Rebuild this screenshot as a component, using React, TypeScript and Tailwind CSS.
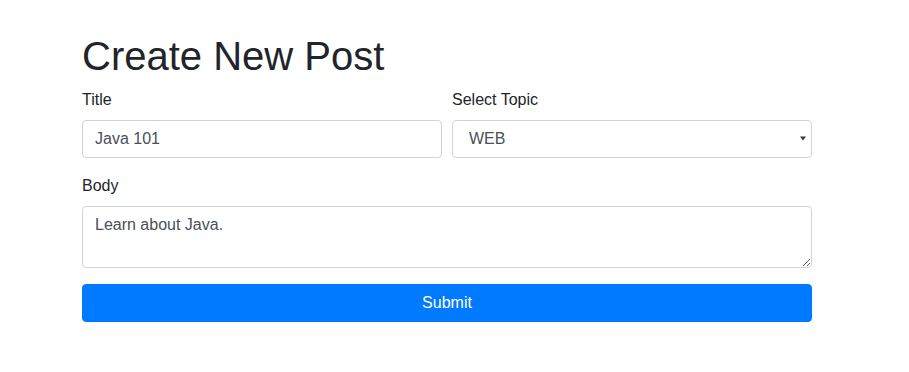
import React from "react";

export default function App() {
  return (
    <div className="min-h-screen bg-white text-[#212529] text-[16px] leading-[24px]" style={{ fontFamily: '"Liberation Sans", Arial, sans-serif' }}>
      <div className="w-[730px] ml-[82px] pt-[32px]">
        <h1 className="text-[40px] leading-[48px] font-normal mb-[8px]">Create New Post</h1>
        <form onSubmit={(e) => e.preventDefault()}>
          <div className="grid grid-cols-2 gap-x-[10px] mb-[16px]">
            <div>
              <label className="block mb-[8px]">Title</label>
              <input
                defaultValue="Java 101"
                className="block w-full h-[38px] px-[12px] py-[6px] border border-[#ced4da] rounded-[4px] text-[#495057] bg-white outline-none"
              />
            </div>
            <div>
              <label className="block mb-[8px]">Select Topic</label>
              <div className="relative">
                <select
                  defaultValue="WEB"
                  className="block w-full h-[38px] pl-[16px] pr-[24px] py-[6px] border border-[#ced4da] rounded-[4px] text-[#495057] bg-white outline-none appearance-none"
                >
                  <option>WEB</option>
                  <option>JAVA</option>
                  <option>MOBILE</option>
                </select>
                <svg className="absolute right-[6px] top-[16px] pointer-events-none" width="6" height="5" viewBox="0 0 6 5">
                  <path d="M0 0.5 L6 0.5 L3 4.5 Z" fill="#3a3a3a" />
                </svg>
              </div>
            </div>
          </div>
          <div className="mb-[16px]">
            <label className="block mb-[8px]">Body</label>
            <textarea
              rows={2}
              defaultValue="Learn about Java."
              className="block w-full h-[62px] px-[12px] py-[6px] border border-[#ced4da] rounded-[4px] text-[#495057] bg-white outline-none leading-[24px]"
            />
          </div>
          <button type="submit" className="block w-full h-[38px] bg-[#007bff] text-white rounded-[4px] border border-[#007bff]">
            Submit
          </button>
        </form>
      </div>
    </div>
  );
}
